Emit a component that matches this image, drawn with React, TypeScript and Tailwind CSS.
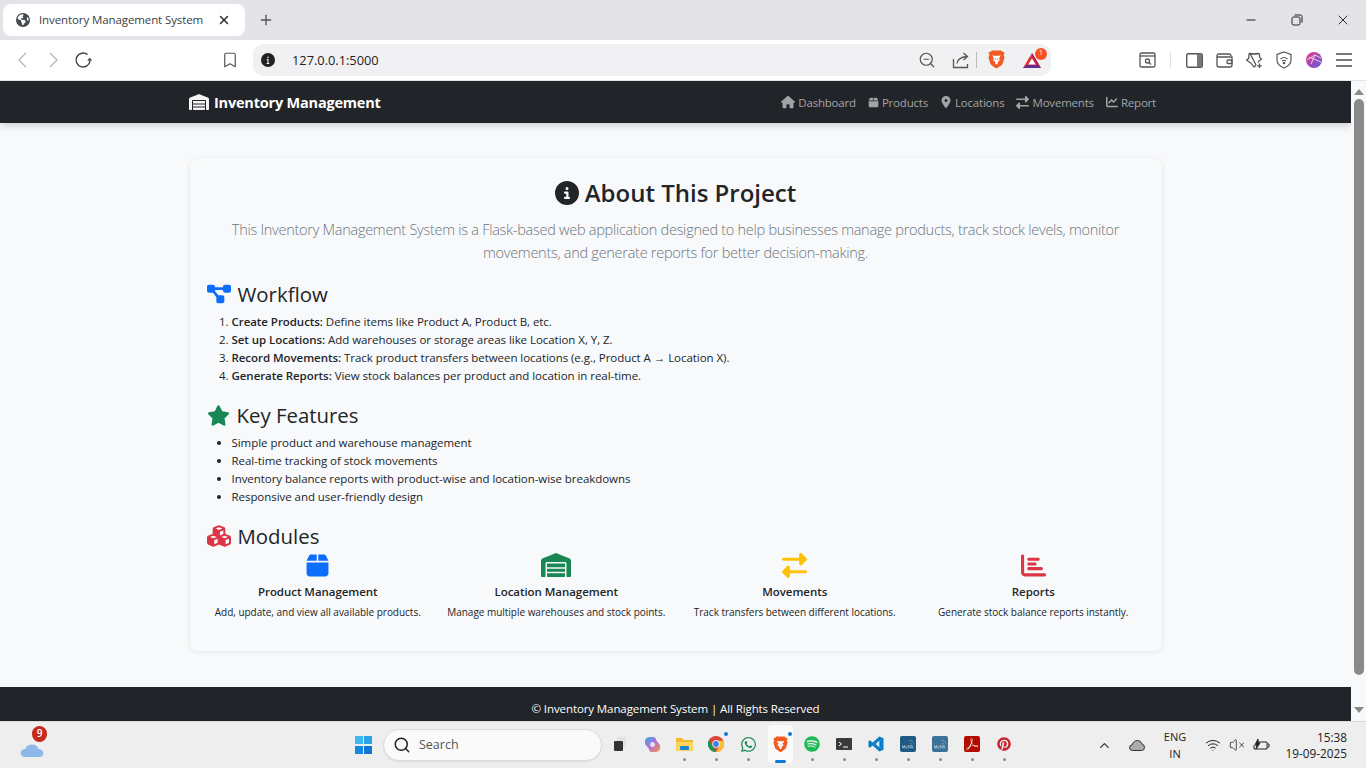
import React from "react";
import {
  FaHouse, FaBox, FaLocationDot, FaRightLeft, FaChartLine, FaWarehouse, FaCircleInfo,
  FaDiagramProject, FaStar, FaCubes, FaChartBar, FaEarthAmericas, FaWhatsapp, FaSpotify, FaPinterest, FaInfo,
} from "react-icons/fa6";
import { SiAdobeacrobatreader, SiMysql } from "react-icons/si";
import { VscChevronLeft, VscChevronRight } from "react-icons/vsc";
import { LuBookmark, LuZoomOut, LuX, LuPlus, LuSearch, LuMinus, LuChevronUp, LuWifi, LuVolumeX } from "react-icons/lu";

const Brave = ({ size = 18 }: { size?: number }) => (
  <svg width={size} height={size * 1.12} viewBox="0 0 20 22">
    <path d="M4.5 0.5 L15.5 0.5 L17 2 L19.5 2.8 L18.4 6 L19.5 8.5 L17 16.5 Q15 18.5 10 21.5 Q5 18.5 3 16.5 L0.5 8.5 L1.6 6 L0.5 2.8 L3 2 Z" fill="#f15a22" />
    <path d="M5 6 L8.5 7 L10 6.3 L11.5 7 L15 6 L13 10 L14 12 L11.5 14 L11.5 16 L10 17 L8.5 16 L8.5 14 L6 12 L7 10 Z" fill="#fff" />
    <path d="M8 10 L9 11 M12 10 L11 11" stroke="#f15a22" strokeWidth="1.2" />
  </svg>
);

const Bat = () => (
  <svg width="20" height="17" viewBox="0 0 20 17">
    <path d="M10 1 L19 16 L1 16 Z" fill="#e0343a" />
    <path d="M1 16 L19 16 L15.5 13 L4.5 13 Z" fill="#662d91" />
    <path d="M10 1 L19 16 L15.5 13 L10 4.5 Z" fill="#9e1f63" />
    <path d="M10 6.5 L13.6 12.6 L6.4 12.6 Z" fill="#fff" />
  </svg>
);

const Chrome = () => (
  <svg width="16" height="16" viewBox="0 0 20 20">
    <circle cx="10" cy="10" r="10" fill="#db4437" />
    <path d="M1.3 5 L6 13 L10 20 A10 10 0 0 1 1.3 5" fill="#0f9d58" />
    <path d="M10 5.5 L19.2 6 A10 10 0 0 1 10 20 L14 12 Z" fill="#fbc02d" />
    <circle cx="10" cy="10" r="4.6" fill="#fff" />
    <circle cx="10" cy="10" r="3.6" fill="#3f7fe8" />
  </svg>
);

const NavLink = ({ icon, label }: { icon: React.ReactNode; label: string }) => (
  <span className="flex items-center gap-[3px] text-[11.5px] tracking-[-0.2px] text-[#a1a4a7]">
    {icon}
    <span className="mt-[1px]">{label}</span>
  </span>
);

const Module = ({ icon, title, text }: { icon: React.ReactNode; title: string; text: string }) => (
  <div className="flex flex-col items-center">
    <div className="flex h-[26px] items-center">{icon}</div>
    <div className="mt-[5px] h-[18px] text-[11.5px] font-semibold leading-[18px] tracking-[-0.05px] text-[#212529]">{title}</div>
    <div className="mt-[3px] h-[16px] whitespace-nowrap text-[10px] leading-[16px] tracking-[-0.02px] text-[#212529]">{text}</div>
  </div>
);

const TrayDot = () => <span className="h-[3px] w-[3px] rounded-full bg-[#8a8a8a]" />;

const TaskIcon = ({ children, dot = true, badge = false }: { children: React.ReactNode; dot?: boolean; badge?: boolean }) => (
  <div className="relative flex h-[46px] w-8 flex-col items-center pt-[11px]">
    <div className="flex h-[22px] w-8 items-center justify-center">{children}</div>
    <div className="mt-[3px] flex h-[3px] items-center">{dot && <TrayDot />}</div>
    {badge && <span className="absolute right-[4px] top-[10px] h-[4px] w-[4px] rounded-full bg-[#0f78d6]" />}
  </div>
);

const Squares = () => (
  <svg width="12" height="14" viewBox="0 0 12 14">
    <rect x="3" y="0" width="9" height="10" rx="1" fill="#e2e2e2" />
    <rect x="0" y="4" width="9" height="10" rx="1" fill="#333" />
  </svg>
);

export default function App() {
  return (
    <div className="flex h-[768px] w-[1366px] flex-col overflow-hidden bg-[#eeeeee] font-['Open_Sans',sans-serif]">
      {/* Tab strip */}
      <div className="flex h-[40px] shrink-0 items-start bg-[#e3e3e8] pl-[3px] pt-[4px]">
        <div className="flex h-[32px] w-[242px] items-center rounded-[8px] bg-white pl-[13px]">
          <FaEarthAmericas className="text-[14px] text-[#444a50]" />
          <span className="ml-[9px] w-[178px] text-[11.5px] tracking-[-0.1px] text-[#3c4043]">Inventory Management System</span>
          <LuX className="text-[14px] text-[#333]" strokeWidth={2.6} />
        </div>
        <div className="ml-[13px] flex h-[32px] items-center">
          <LuPlus className="text-[16px] text-[#555]" />
        </div>
        <div className="ml-auto flex h-[32px] items-center">
          <span className="flex w-[46px] justify-center"><LuMinus className="text-[14px] text-[#222]" /></span>
          <span className="flex w-[46px] justify-center">
            <svg width="12" height="12" viewBox="0 0 12 12" fill="none" stroke="#222"><rect x="1" y="3" width="8" height="8" rx="1.5" /><path d="M3.5 1 H9.5 Q11 1 11 2.5 V8.5" /></svg>
          </span>
          <span className="flex w-[46px] justify-center"><LuX className="text-[16px] text-[#222]" strokeWidth={1.4} /></span>
        </div>
      </div>

      {/* Toolbar */}
      <div className="flex h-[41px] shrink-0 items-start border-b border-[#e5e5e5] bg-white pl-[8px] pr-[7px] pt-[4px]">
        <div className="flex h-[32px] w-[30px] items-center justify-center text-[#b5b5b5]"><VscChevronLeft className="text-[24px]" /></div>
        <div className="flex h-[32px] w-[30px] items-center justify-center text-[#b5b5b5]"><VscChevronRight className="text-[24px]" /></div>
        <div className="flex h-[32px] w-[30px] items-center justify-center">
          <svg width="18" height="18" viewBox="0 0 18 18" fill="none" stroke="#444" strokeWidth="1.5">
            <path d="M13.5 3.6 A7 7 0 1 0 16 10" />
            <path d="M13.2 9.8 L18 9.8 L15.8 6.4 Z" fill="#444" stroke="none" />
          </svg>
        </div>
        <div className="ml-[117px] flex h-[32px] w-[30px] items-center justify-center text-[#555]"><LuBookmark className="text-[18px]" strokeWidth={1.6} /></div>
        <div className="ml-[8px] flex h-[32px] w-[798px] items-center rounded-[10px] bg-[#f1f1f4] pl-[8px]">
          <span className="flex h-[14px] w-[14px] items-center justify-center rounded-full bg-[#222]"><FaInfo className="text-[8px] text-white" /></span>
          <span className="ml-[17px] mt-[1px] w-[620px] text-[12.8px] text-[#222]">127.0.0.1:5000</span>
          <LuZoomOut className="ml-[6px] text-[18px] text-[#555]" strokeWidth={1.6} />
          <svg className="ml-[16px]" width="17" height="17" viewBox="0 0 17 17" fill="none" stroke="#555" strokeWidth="1.3">
            <path d="M1.5 7 V15.5 H15.5 V12" />
            <path d="M5 11.5 Q5.5 5.5 15 4.5" />
            <path d="M11.5 1 L15.5 4.5 L11.5 8" />
          </svg>
          <span className="ml-[7px] h-[16px] w-px bg-[#bbb]" />
          <span className="ml-[11px] flex"><Brave size={17} /></span>
          <span className="relative ml-[17px] flex">
            <Bat />
            <span className="absolute -right-[5px] -top-[4px] flex h-[12px] w-[12px] items-center justify-center rounded-full bg-[#f4511e] text-[7px] text-white">1</span>
          </span>
        </div>
        <div className="ml-auto flex h-[32px] items-center">
          <span className="flex w-[30px] justify-center">
            <svg width="17" height="16" viewBox="0 0 17 16" fill="none" stroke="#555" strokeWidth="1.3"><rect x="1" y="1" width="15" height="14" rx="1.5" /><path d="M1 4 H16" /><circle cx="8.5" cy="9" r="2" /><path d="M10 10.5 L12 12.5" /></svg>
          </span>
          <span className="mx-[8px] h-[16px] w-px bg-[#ddd]" />
          <span className="flex w-[30px] justify-center">
            <svg width="17" height="15" viewBox="0 0 17 15"><rect x="0.7" y="0.7" width="15.6" height="13.6" rx="1.5" fill="#fff" stroke="#555" strokeWidth="1.4" /><rect x="11" y="1" width="5" height="13" fill="#777" /></svg>
          </span>
          <span className="flex w-[30px] justify-center">
            <svg width="17" height="15" viewBox="0 0 17 15" fill="none" stroke="#555" strokeWidth="1.3"><path d="M1 3 Q1 1 3 1 H13 Q15 1 15 3 M1 3 V12 Q1 14 3 14 H14 Q16 14 16 12 V4 H1" /><rect x="11" y="7" width="5" height="3.5" rx="1" /></svg>
          </span>
          <span className="flex w-[30px] justify-center">
            <svg width="18" height="17" viewBox="0 0 18 17" fill="none" stroke="#555" strokeWidth="1.3"><path d="M5 1.5 Q9 2.5 13 1.5 Q15 1.5 14.5 4 Q14.5 6 16.5 7 Q14 8.5 13 10.5 M11 13 Q10 14.5 9 15 Q6.5 11 1.5 8 Q4 7 4 4.5 Q3.5 1.5 5 1.5 Z" strokeLinejoin="round" /><path d="M14.5 11.5 V16 M12.3 13.8 H16.8" /></svg>
          </span>
          <span className="flex w-[30px] justify-center">
            <svg width="16" height="18" viewBox="0 0 16 18" fill="none" stroke="#555" strokeWidth="1.2"><path d="M8 1 L15 3.5 V9 Q15 14 8 17 Q1 14 1 9 V3.5 Z" /><path d="M4.5 8 Q8 5 11.5 8 M6 10 Q8 8.5 10 10" /><circle cx="8" cy="12" r="0.7" fill="#555" /></svg>
          </span>
          <span className="flex w-[30px] justify-center">
            <svg width="16" height="16" viewBox="0 0 16 16"><defs><linearGradient id="pf" x1="0" y1="0" x2="1" y2="1"><stop offset="0" stopColor="#ee3a80" /><stop offset="1" stopColor="#5a5be8" /></linearGradient></defs><circle cx="8" cy="8" r="8" fill="url(#pf)" /><path d="M1 8 L9 3 L15 6 M9 3 L5 12 M3 5 L15 10" stroke="#fff" strokeWidth="0.7" fill="none" /></svg>
          </span>
          <span className="flex w-[30px] flex-col items-center gap-[4px]">
            <span className="h-[2px] w-[16px] bg-[#777]" />
            <span className="h-[2px] w-[16px] bg-[#777]" />
            <span className="h-[2px] w-[16px] bg-[#777]" />
          </span>
        </div>
      </div>

      {/* Page */}
      <div className="flex h-[640px] shrink-0 bg-[#f8f9fa]">
        <div className="flex w-[1351px] flex-col overflow-hidden">
          <nav className="flex h-[42px] shrink-0 items-center bg-[#212529] pl-[189px] pr-[195px] shadow-[0_2px_8px_rgba(0,0,0,0.2)]">
            <FaWarehouse className="text-[20px] text-[#f5f5f5]" />
            <span className="ml-[5px] mt-[1px] text-[14.5px] font-bold tracking-[-0.2px] text-white">Inventory Management</span>
            <div className="ml-auto flex items-center gap-[12px]">
              <NavLink icon={<FaHouse className="text-[14px]" />} label="Dashboard" />
              <NavLink icon={<FaBox className="text-[11px]" />} label="Products" />
              <NavLink icon={<FaLocationDot className="text-[12px]" />} label="Locations" />
              <NavLink icon={<FaRightLeft className="text-[13px]" />} label="Movements" />
              <NavLink icon={<FaChartLine className="text-[12px]" />} label="Report" />
            </div>
          </nav>

          <main className="flex flex-1 justify-center pt-[35px]">
            <div className="h-[493px] w-[972px] rounded-[8px] bg-[#f8f9fa] px-[17px] pt-[17px] shadow-[0_1px_4px_rgba(0,0,0,0.08)]">
              <h1 className="flex h-[36px] items-center justify-center gap-[6px] text-[24px] font-semibold text-[#212529]">
                <FaCircleInfo className="text-[24px]" />
                About This Project
              </h1>
              <p className="mx-auto mt-[8px] w-[910px] text-center text-[14.5px] font-light leading-[22.5px] tracking-[-0.27px] text-[#6c757d]">
                This Inventory Management System is a Flask-based web application designed to help businesses manage products, track stock levels, monitor movements, and generate reports for better decision-making.
              </p>

              <h2 className="mt-[17px] flex h-[26px] items-center gap-[7px] text-[20.4px] font-medium text-[#212529]">
                <FaDiagramProject className="text-[24px] text-[#0d6efd]" />
                Workflow
              </h2>
              <ol className="mt-[6px] list-decimal pl-[25px] text-[11.5px] leading-[18px] tracking-[-0.05px] text-[#212529]">
                <li><b className="font-semibold">Create Products:</b> Define items like Product A, Product B, etc.</li>
                <li><b className="font-semibold">Set up Locations:</b> Add warehouses or storage areas like Location X, Y, Z.</li>
                <li><b className="font-semibold">Record Movements:</b> Track product transfers between locations (e.g., Product A → Location X).</li>
                <li><b className="font-semibold">Generate Reports:</b> View stock balances per product and location in real-time.</li>
              </ol>

              <h2 className="mt-[17px] flex h-[26px] items-center gap-[7px] text-[20.4px] font-medium text-[#212529]">
                <FaStar className="text-[23px] text-[#198754]" />
                Key Features
              </h2>
              <ul className="mt-[6px] list-disc pl-[25px] text-[11.5px] leading-[18px] tracking-[-0.05px] text-[#212529]">
                <li>Simple product and warehouse management</li>
                <li>Real-time tracking of stock movements</li>
                <li>Inventory balance reports with product-wise and location-wise breakdowns</li>
                <li>Responsive and user-friendly design</li>
              </ul>

              <h2 className="mt-[17px] flex h-[26px] items-center gap-[7px] text-[20.4px] font-medium text-[#212529]">
                <FaCubes className="text-[24px] text-[#dc3545]" />
                Modules
              </h2>
              <div className="-mx-2 mt-[3px] grid grid-cols-4">
                <Module icon={<FaBox className="text-[25px] text-[#0d6efd]" />} title="Product Management" text="Add, update, and view all available products." />
                <Module icon={<FaWarehouse className="text-[30px] text-[#198754]" />} title="Location Management" text="Manage multiple warehouses and stock points." />
                <Module icon={<FaRightLeft className="text-[25px] text-[#ffc107]" />} title="Movements" text="Track transfers between different locations." />
                <Module icon={<FaChartBar className="text-[25px] text-[#dc3545]" />} title="Reports" text="Generate stock balance reports instantly." />
              </div>
            </div>
          </main>

          <footer className="h-[34px] shrink-0 bg-[#212529] pt-[13px] text-center text-[11.5px] leading-[18px] tracking-[-0.1px] text-white">
            © Inventory Management System | All Rights Reserved
          </footer>
        </div>
        <div className="flex w-[15px] flex-col items-center">
          <div className="flex h-[18px] items-end justify-center pb-[4px]">
            <span className="border-x-[5px] border-b-[6px] border-x-transparent border-b-[#8a8a8a]" />
          </div>
          <div className="h-[576px] w-[10px] rounded-[5px] bg-[#8a8a8a]" />
          <div className="mt-auto flex h-[18px] items-start justify-center pt-[4px]">
            <span className="border-x-[5px] border-t-[6px] border-x-transparent border-t-[#8a8a8a]" />
          </div>
        </div>
      </div>

      {/* Taskbar */}
      <div className="flex h-[47px] shrink-0 items-center border-t border-[#d8d8d8] bg-[#eeeeee]">
        <div className="relative ml-[20px] flex w-[26px] items-center">
          <svg width="24" height="18" viewBox="0 0 26 20" className="mt-[7px]"><path d="M6 19 Q0 19 0.5 14 Q1 10 5.5 10 Q7 5 13 5 Q19 5 20 10 Q25.5 10 25.5 15 Q25.5 19 21 19 Z" fill="#8fb8ea" /></svg>
          <span className="absolute -top-[7px] left-[12px] flex h-[16px] w-[15px] items-center justify-center rounded-full bg-[#c42b1c] text-[10px] font-semibold text-white">9</span>
        </div>
        <div className="ml-[309px] flex h-[18px] w-[18px] shrink-0 flex-wrap gap-[1px]">
          <span className="h-[8px] w-[8px] bg-[#3fb8ef]" />
          <span className="h-[8px] w-[8px] bg-[#2aa3e8]" />
          <span className="h-[8px] w-[8px] bg-[#138ae0]" />
          <span className="h-[8px] w-[8px] bg-[#0f78d6]" />
        </div>
        <div className="ml-[10px] flex h-[32px] w-[219px] shrink-0 items-center rounded-full border border-[#dcdcdc] bg-[#fafafa] pl-[9px] shadow-[0_1px_1px_rgba(0,0,0,0.08)]">
          <LuSearch className="text-[18px] text-[#222]" strokeWidth={2} />
          <span className="ml-[8px] text-[12.5px] text-[#555]">Search</span>
        </div>
        <div className="ml-[2px] flex items-center">
          <TaskIcon dot={false}><Squares /></TaskIcon>
          <TaskIcon dot={false}>
            <svg width="17" height="17" viewBox="0 0 17 17"><defs><linearGradient id="cop" x1="0" y1="0" x2="1" y2="1"><stop offset="0" stopColor="#2bb3e8" /><stop offset="0.5" stopColor="#b86ad8" /><stop offset="1" stopColor="#f0a030" /></linearGradient></defs><path d="M5 1 H9 Q12 1 12 4 L16 9 Q17 15 12 16 H8 Q5 16 5 13 L1 8 Q0 2 5 1 Z" fill="url(#cop)" /><circle cx="8.5" cy="8.5" r="2.5" fill="#fff" opacity="0.75" /></svg>
          </TaskIcon>
          <TaskIcon>
            <svg width="17" height="15" viewBox="0 0 17 15"><path d="M0 1 H6 L8 3 H17 V14 H0 Z" fill="#f2b92f" /><rect x="0" y="5" width="17" height="9" fill="#fbd65a" /><rect x="4" y="9" width="9" height="4" rx="1" fill="#1b84d2" /></svg>
          </TaskIcon>
          <TaskIcon badge><Chrome /></TaskIcon>
          <TaskIcon><FaWhatsapp className="text-[17px] text-[#1f8a5a]" /></TaskIcon>
          <div className="relative flex h-[46px] w-8 flex-col items-center pt-[3px]">
            <div className="flex h-[38px] w-[25px] flex-col items-center rounded-[4px] bg-[#fafafa] pt-[8px]">
              <div className="flex h-[22px] items-center"><Brave size={15} /></div>
              <span className="mt-[5px] h-[3px] w-[11px] rounded-full bg-[#0f78d6]" />
            </div>
            <span className="absolute right-[4px] top-[10px] h-[4px] w-[4px] rounded-full bg-[#0f78d6]" />
          </div>
          <TaskIcon><FaSpotify className="text-[16px] text-[#1db954]" /></TaskIcon>
          <TaskIcon>
            <svg width="16" height="12" viewBox="0 0 16 12"><rect width="16" height="12" rx="1" fill="#3a3a3a" /><path d="M3 4 L5.5 6 L3 8" stroke="#fff" fill="none" strokeWidth="1" /><path d="M7 9 H12" stroke="#fff" /></svg>
          </TaskIcon>
          <TaskIcon>
            <svg width="16" height="16" viewBox="0 0 17 17"><path d="M12 0.5 L16.5 2.5 V14.5 L12 16.5 L5 10 L2 12.5 L0.5 11.5 V5.5 L2 4.5 L5 7 Z M12 5 L8 8.5 L12 12 Z" fill="#0a7fcf" fillRule="evenodd" /></svg>
          </TaskIcon>
          <TaskIcon>
            <span className="flex h-[16px] w-[16px] items-center justify-center rounded-[2px] bg-[#1f5a85]"><SiMysql className="text-[13px] text-[#c7d6e2]" /></span>
          </TaskIcon>
          <TaskIcon>
            <span className="flex h-[16px] w-[16px] items-center justify-center rounded-[2px] bg-[#3b7299]"><SiMysql className="text-[13px] text-[#c7d6e2]" /></span>
          </TaskIcon>
          <TaskIcon>
            <span className="flex h-[16px] w-[16px] items-center justify-center rounded-[2px] bg-[#b30b00]"><SiAdobeacrobatreader className="text-[12px] text-white" /></span>
          </TaskIcon>
          <TaskIcon><FaPinterest className="text-[14px] text-[#c8232c]" /></TaskIcon>
        </div>
        <LuChevronUp className="ml-[77px] text-[15px] text-[#333]" />
        <svg className="ml-[17px]" width="16" height="11" viewBox="0 0 16 11"><path d="M3.5 10.5 Q0.5 10.5 0.5 7.5 Q0.5 5 3 5 Q4.5 0.5 8.5 0.5 Q12 0.5 13 4 Q15.5 4.5 15.5 7.5 Q15.5 10.5 12.5 10.5 Z" fill="#aaa" stroke="#333" /></svg>
        <div className="ml-[7px] flex w-[46px] flex-col items-center text-[11px] leading-[17px] text-[#222]">
          <span>ENG</span>
          <span>IN</span>
        </div>
        <LuWifi className="ml-[7px] text-[16px] text-[#222]" strokeWidth={1.5} />
        <LuVolumeX className="ml-[8px] text-[16px] text-[#222]" strokeWidth={1.2} />
        <svg className="ml-[8px]" width="17" height="13" viewBox="0 0 17 13" fill="none" stroke="#222"><path d="M4 3 H14 V10 H1 V6" /><path d="M14.5 5 H16 V8 H14.5" /><path d="M5 0 L2 6 L4 6 L3 10 L7 4 L5 4 Z" fill="#222" /></svg>
        <div className="ml-auto flex flex-col items-end pr-[19px] text-[11.8px] leading-[16px] text-[#222]">
          <span>15:38</span>
          <span>19-09-2025</span>
        </div>
      </div>
    </div>
  );
}
